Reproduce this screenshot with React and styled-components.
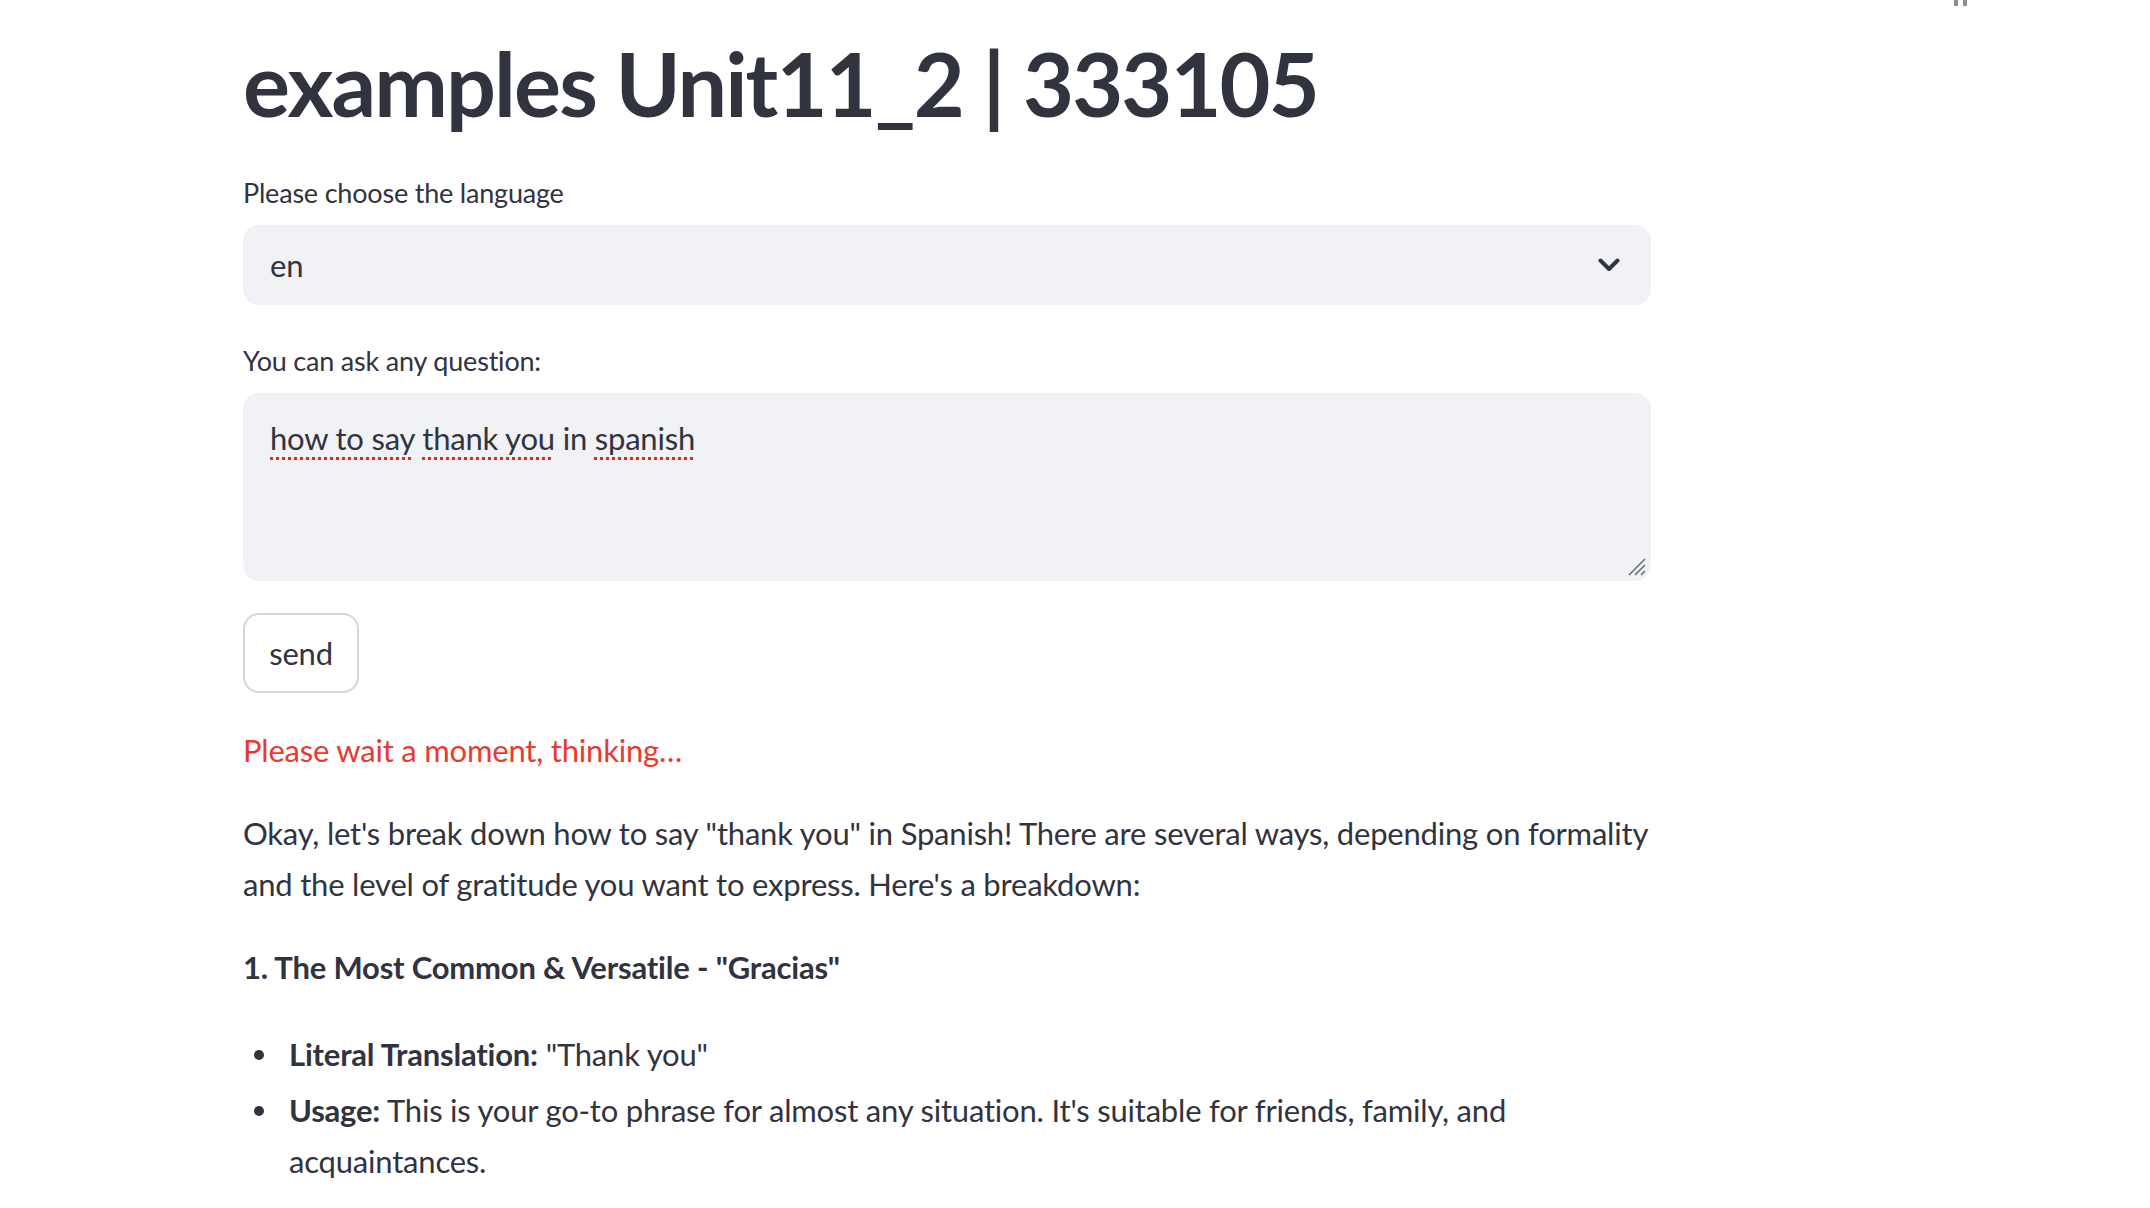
import React from "react";
import styled, { createGlobalStyle } from "styled-components";

const Global = createGlobalStyle`
  html, body { margin: 0; padding: 0; background: #ffffff; }
  body {
    font-family: "Source Sans Pro", Lato, "Liberation Sans", sans-serif;
    color: #31333f;
    -webkit-font-smoothing: antialiased;
  }
  * { box-sizing: border-box; }
`;

const Page = styled.div`
  position: relative;
  min-height: 1208px;
  width: 2150px;
  overflow: hidden;
`;

const StatusMark = styled.div`
  position: absolute;
  top: 0;
  left: 1954px;
  display: flex;
  gap: 5px;
`;

const StatusBar = styled.span`
  display: block;
  width: 4px;
  height: 6px;
  background: #8b8c94;
`;

const Main = styled.main`
  width: 1408px;
  margin-left: 243px;
  padding-top: 31px;
  display: flex;
  flex-direction: column;
`;

const Title = styled.h1`
  margin: 0;
  font-size: 88px;
  font-weight: 700;
  line-height: 1.2;
  letter-spacing: -1.9px;
  color: #31333f;
`;

const Field = styled.div`
  display: flex;
  flex-direction: column;
  margin-top: ${(p) => p.$top}px;
`;

const Label = styled.label`
  font-size: 27px;
  letter-spacing: -0.2px;
  line-height: 48px;
  height: 48px;
  margin-bottom: 8px;
  color: #31333f;
`;

const SelectBox = styled.div`
  height: 80px;
  background: #f0f2f6;
  border-radius: 16px;
  display: flex;
  align-items: center;
  justify-content: space-between;
  padding: 0 31px 0 27px;
  font-size: 31px;
  letter-spacing: -0.2px;
`;

const TextArea = styled.div`
  position: relative;
  height: 188px;
  background: #f0f2f6;
  border-radius: 16px;
  padding: 20px 27px;
  font-size: 31px;
  letter-spacing: -0.2px;
  line-height: 51.2px;
`;

const Misspelled = styled.span`
  text-decoration: underline dotted #e5281e;
  text-decoration-thickness: 3px;
  text-underline-offset: 7px;
`;

const Grip = styled.svg`
  position: absolute;
  right: 4px;
  bottom: 4px;
`;

const Button = styled.button`
  align-self: flex-start;
  margin-top: 32px;
  height: 80px;
  width: 116px;
  padding: 0;
  background: #ffffff;
  border: 2px solid rgba(49, 51, 63, 0.2);
  border-radius: 16px;
  font-family: inherit;
  font-size: 31px;
  letter-spacing: -0.2px;
  color: #31333f;
`;

const Notice = styled.p`
  margin: 32px 0 0;
  font-size: 31px;
  letter-spacing: -0.2px;
  line-height: 51.2px;
  color: #e93a2f;
`;

const Ellipsis = styled.span`
  letter-spacing: 2px;
`;

const Para = styled.p`
  margin: 32px 0 0;
  font-size: 31px;
  letter-spacing: -0.2px;
  line-height: 51.2px;
  color: #31333f;
`;

const List = styled.ul`
  margin: 32px 0 0;
  padding: 0 0 0 46px;
  list-style: none;
  font-size: 31px;
  letter-spacing: -0.2px;
  line-height: 51.2px;
`;

const Item = styled.li`
  position: relative;
  margin: 4px 0;

  &::before {
    content: "";
    position: absolute;
    left: -35px;
    top: 21px;
    width: 10px;
    height: 10px;
    border-radius: 50%;
    background: #31333f;
  }
`;

export default function App() {
  return (
    <Page>
      <Global />
      <StatusMark>
        <StatusBar />
        <StatusBar />
      </StatusMark>
      <Main>
        <Title>examples Unit11_2 | 333105</Title>
        <Field $top={32}>
          <Label>Please choose the language</Label>
          <SelectBox>
            <span>en</span>
            <svg width="22" height="14" viewBox="0 0 22 14">
              <path d="M2.5 2.5 L11 11 L19.5 2.5" fill="none" stroke="#31333f" strokeWidth="4" strokeLinecap="round" strokeLinejoin="round" />
            </svg>
          </SelectBox>
        </Field>
        <Field $top={32}>
          <Label>You can ask any question:</Label>
          <TextArea>
            <Misspelled>how to say</Misspelled> <Misspelled>thank you</Misspelled> in <Misspelled>spanish</Misspelled>
            <Grip width="22" height="22" viewBox="0 0 22 22">
              <path d="M20 4 L4 20 M20 10 L10 20 M20 16 L16 20" stroke="#6b6d76" strokeWidth="1.6" fill="none" />
            </Grip>
          </TextArea>
        </Field>
        <Button>send</Button>
        <Notice>
          Please wait a moment, thinking<Ellipsis>…</Ellipsis>
        </Notice>
        <Para>
          Okay, let's break down how to say "thank you" in Spanish! There are several ways, depending on formality and the level of gratitude you want to express. Here's a breakdown:
        </Para>
        <Para>
          <strong>1. The Most Common &amp; Versatile - "Gracias"</strong>
        </Para>
        <List>
          <Item>
            <strong>Literal Translation:</strong> "Thank you"
          </Item>
          <Item>
            <strong>Usage:</strong> This is your go-to phrase for almost any situation. It's suitable for friends, family, and acquaintances.
          </Item>
        </List>
      </Main>
    </Page>
  );
}
